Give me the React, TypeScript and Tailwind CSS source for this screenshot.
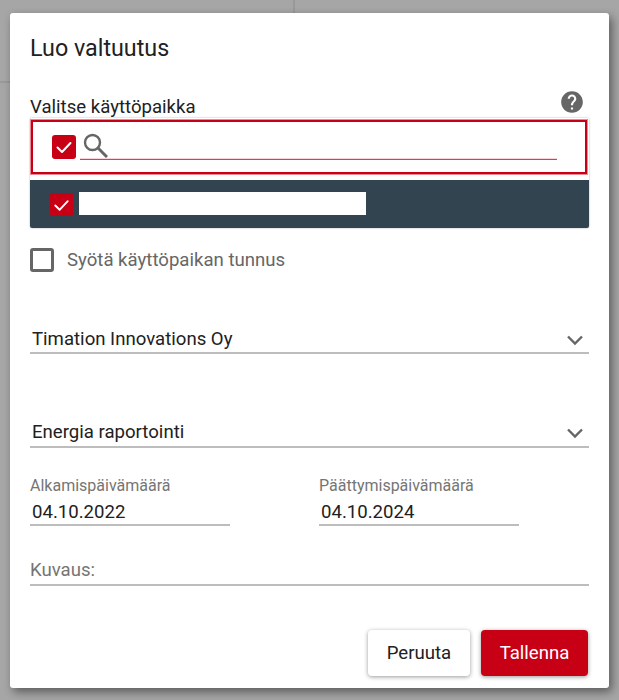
import React from "react";

function Check() {
  return (
    <svg viewBox="0 0 24 24" className="w-[24px] h-[24px]" fill="none" stroke="#fff" strokeWidth="2" strokeLinecap="round" strokeLinejoin="round">
      <path d="M5.500 12.500l4.500 4.500 8.500-9" />
    </svg>
  );
}

function Chevron() {
  return (
    <svg viewBox="0 0 18 12" className="w-[18px] h-[12px]" fill="none" stroke="#666" strokeWidth="2.400">
      <path d="M2 2.500l7 7 7-7" />
    </svg>
  );
}

function SelectField({ label, raised }: { label: string; raised?: boolean }) {
  return (
    <div className={raised ? "flex items-center justify-between h-[30px] pl-[2px] pr-[5px] border-b-2 border-[#bdbdbd] text-[18.600px] leading-[28px] text-[#212121]" : "flex items-center justify-between h-[30px] pt-[2px] pl-[2px] pr-[5px] border-b-2 border-[#bdbdbd] text-[18.600px] leading-[28px] text-[#212121]"}>
      <span>{label}</span>
      <span className="mt-[1px]"><Chevron /></span>
    </div>
  );
}

function DateField({ label, value }: { label: string; value: string }) {
  return (
    <div className="w-[200px]">
      <div className="text-[16px] leading-[18px] text-[#757575]">{label}</div>
      <div className="mt-[4px] h-[27px] pl-[2px] border-b-2 border-[#bdbdbd] text-[18.600px] leading-[26px] text-[#212121]">{value}</div>
    </div>
  );
}

export default function App() {
  return (
    <div className="relative h-[700px] w-[619px] overflow-hidden bg-[#a6a6a6] pt-[13px] pl-[10px] font-['Roboto',sans-serif]">
      <div className="absolute left-[293px] top-0 h-[13px] w-[2px] bg-[#999999]" />
      <div className="absolute left-0 top-[81px] h-[2px] w-[10px] bg-[#999999]" />
      <div className="relative w-[599px] h-[675px] rounded-[3px] bg-white pt-[20px] px-[20px] shadow-[3px_4px_10px_rgba(0,0,0,0.45)]">
        <h1 className="text-[23.300px] leading-[30px] text-[#212121]">Luo valtuutus</h1>

        <div className="mt-[31px] flex h-[26px] items-center justify-between">
          <span className="text-[18.600px] leading-[26px] text-[#212121]">Valitse käyttöpaikka</span>
          <svg viewBox="0 0 24 24" className="mr-[4px] -mt-[11px] h-[26px] w-[26px]" fill="#666666">
            <path d="M12 2C6.480 2 2 6.480 2 12s4.480 10 10 10 10-4.480 10-10S17.520 2 12 2zm1 17h-2v-2h2v2zm2.070-7.750l-.9.920C13.450 12.900 13 13.500 13 15h-2v-.5c0-1.100.450-2.100 1.170-2.830l1.240-1.260c.370-.360.590-.860.590-1.410 0-1.100-.9-2-2-2s-2 .9-2 2H8c0-2.210 1.790-4 4-4s4 1.790 4 4c0 .880-.360 1.680-.930 2.250z" />
          </svg>
        </div>

        <div className="-mt-[2px] w-[559px] h-[110px] overflow-hidden rounded-[2px] pt-[2px] shadow-[0_0_2px_rgba(0,0,0,0.35)]">
          <div className="flex h-[54px] w-[556px] ml-[1px] items-start border-2 border-[#c80016] pl-[19px] shadow-[0_0_0_1px_rgba(200,0,22,0.45)]">
            <span className="mt-[13px] flex h-[24px] w-[24px] shrink-0 items-center justify-center rounded-[3px] bg-[#c80016]"><Check /></span>
            <div className="relative ml-[4px] mt-[6px] flex h-[32px] w-[477px] flex-col justify-end">
              <svg viewBox="0 0 26 26" className="absolute left-[2px] top-[4px] h-[26px] w-[26px]" fill="none" stroke="#666" strokeWidth="2.400">
                <circle cx="10.500" cy="10.500" r="7.500" />
                <path d="M16 16l9 9" strokeWidth="3" />
              </svg>
              <div className="h-[2px] w-full border-b border-[#e8394b] bg-[#fbd3d8]" />
            </div>
          </div>
          <div className="mt-[6px] flex h-[48px] items-start bg-[#31444f] pl-[20px] pt-[12px]">
            <span className="mt-[1px] flex h-[23px] w-[23px] items-center justify-center rounded-[2px] bg-[#c80016]"><Check /></span>
            <div className="ml-[6px] h-[23px] w-[287px] bg-white" />
          </div>
        </div>

        <div className="mt-[20px] flex items-center">
          <span className="h-[24px] w-[24px] rounded-[3px] border-[3px] border-[#666666] bg-white" />
          <span className="ml-[13px] text-[18.600px] leading-[24px] text-[#666666]">Syötä käyttöpaikan tunnus</span>
        </div>

        <div className="mt-[52px]"><SelectField label="Timation Innovations Oy" /></div>
        <div className="mt-[64px]"><SelectField label="Energia raportointi" raised /></div>

        <div className="mt-[29px] flex gap-[89px]">
          <DateField label="Alkamispäivämäärä" value="04.10.2022" />
          <DateField label="Päättymispäivämäärä" value="04.10.2024" />
        </div>

        <div className="mt-[32px] h-[28px] border-b-2 border-[#bdbdbd] text-[18.600px] leading-[24px] text-[#757575]">Kuvaus:</div>

        <div className="mt-[44px] flex justify-end gap-[11px] pr-[1px]">
          <button className="h-[46px] w-[102px] rounded-[4px] bg-white pt-[2px] text-[18.600px] text-[#212121] shadow-[0_1px_4px_rgba(0,0,0,0.4)]">Peruuta</button>
          <button className="h-[46px] w-[107px] rounded-[4px] bg-[#c80016] pt-[2px] text-[18.600px] text-white shadow-[0_1px_4px_rgba(0,0,0,0.4)]">Tallenna</button>
        </div>
      </div>
    </div>
  );
}
